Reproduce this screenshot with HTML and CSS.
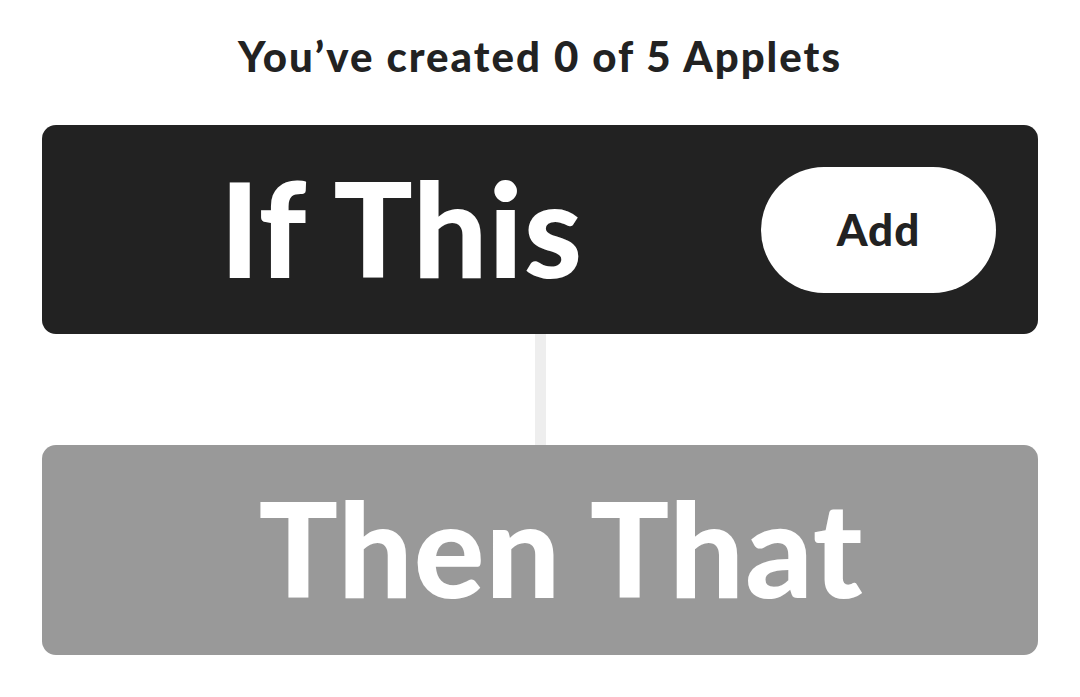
FILE: index.html
```html
<!DOCTYPE html>
<html lang="en">
<head>
<meta charset="utf-8">
<title>Create Applet</title>
<link rel="stylesheet" href="styles.css">
</head>
<body>
<main class="page">
  <h1 class="title">You’ve created 0 of 5 Applets</h1>
  <section class="step step-if">
    <span class="step-label">If This</span>
    <button class="add-btn" type="button">Add</button>
  </section>
  <div class="connector"></div>
  <section class="step step-that">
    <span class="step-label">Then That</span>
  </section>
</main>
</body>
</html>
```

FILE: styles.css
```css
html, body {
  margin: 0;
  padding: 0;
  background: #ffffff;
}

body {
  font-family: Lato, "Noto Sans", "Liberation Sans", sans-serif;
  color: #222222;
}

.page {
  display: flex;
  flex-direction: column;
  padding: 0 42px;
}

.title {
  margin: 0;
  height: 125px;
  display: flex;
  align-items: center;
  justify-content: center;
  padding-bottom: 14px;
  box-sizing: border-box;
  font-size: 42px;
  font-weight: 900;
  letter-spacing: 2px;
  color: #222222;
}

.step {
  height: 209px;
  border-radius: 14px;
  display: flex;
  align-items: center;
  box-sizing: border-box;
}

.step-if {
  background: #222222;
  padding-right: 42px;
}

.step-that {
  background: #999999;
  justify-content: center;
  height: 210px;
  padding-left: 42px;
}

.step-label {
  color: #ffffff;
  font-size: 132px;
  font-weight: 900;
  line-height: 1;
  letter-spacing: 1px;
  padding-bottom: 6px;
}

.step-if .step-label {
  flex: 1;
  text-align: center;
}

.add-btn {
  width: 235px;
  height: 126px;
  border: none;
  border-radius: 63px;
  background: #ffffff;
  color: #222222;
  font-family: inherit;
  font-size: 44px;
  font-weight: 900;
  letter-spacing: 1px;
  padding: 0 0 2px;
}

.connector {
  align-self: center;
  width: 11px;
  height: 111px;
  background: #eeeeee;
}
```
